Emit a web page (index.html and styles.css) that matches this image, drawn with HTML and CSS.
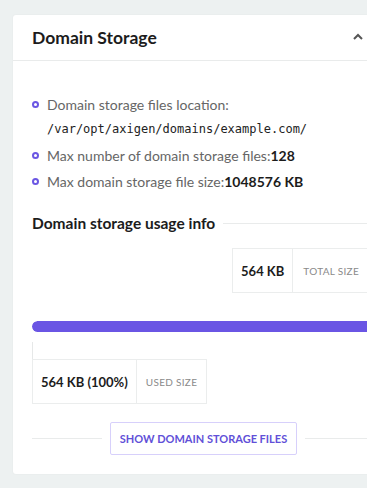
FILE: index.html
```html
<!DOCTYPE html>
<html lang="en">
<head>
    <meta charset="UTF-8">
    <title>Domain Storage</title>
    <link rel="stylesheet" href="styles.css">
</head>
<body>
<div class="page">
    <div class="card">
        <div class="card-head">
            <h2 class="card-title">Domain Storage</h2>
            <svg class="chevron" width="10" height="7" viewBox="0 0 10 7">
                <path d="M1 6 L5 2 L9 6" fill="none" stroke="#555" stroke-width="2"/>
            </svg>
        </div>
        <div class="card-body">
            <ul class="info">
                <li>
                    <span class="dot"></span>
                    <div>Domain storage files location:<br><span class="mono">/var/opt/axigen/domains/example.com/</span></div>
                </li>
                <li>
                    <span class="dot"></span>
                    <div>Max number of domain storage files:<b>128</b></div>
                </li>
                <li>
                    <span class="dot"></span>
                    <div>Max domain storage file size:<b>1048576 KB</b></div>
                </li>
            </ul>

            <div class="section-title">
                <h3>Domain storage usage info</h3>
                <span class="rule"></span>
            </div>

            <div class="total-row">
                <div class="stat">
                    <span class="stat-value">564 KB</span>
                    <span class="stat-label">TOTAL SIZE</span>
                </div>
            </div>

            <div class="bar"><div class="bar-fill" style="width: 100%"></div></div>

            <div class="tick"></div>
            <div class="used-row">
                <div class="stat">
                    <span class="stat-value">564 KB (100%)</span>
                    <span class="stat-label">USED SIZE</span>
                </div>
            </div>

            <div class="actions">
                <span class="rule"></span>
                <button class="btn">SHOW DOMAIN STORAGE FILES</button>
                <span class="rule"></span>
            </div>
        </div>
    </div>
</div>
</body>
</html>
```

FILE: styles.css
```css
*{
    margin: 0;
    padding: 0;
    box-sizing: border-box;
}
body{
    background-color: #edf1f1;
    font-family: Lato, "Liberation Sans", sans-serif;
    color: #222;
    overflow: hidden;
}
.page{
    padding: 15px 0 0 13px;
    height: 488px;
}
.card{
    width: 375px;
    height: 459px;
    background-color: #fff;
    border-radius: 3px;
    box-shadow: 0 0 2px rgba(0,0,0,0.05);
}
.card-head{
    height: 46px;
    border-bottom: 1px solid #e9ebeb;
    display: flex;
    align-items: center;
    justify-content: space-between;
    padding: 0 25px 0 19px;
}
.card-title{
    font-size: 17.5px;
    font-weight: 700;
    color: #1c1c1c;
}
.chevron{
    margin-top: -2px;
}
.card-body{
    padding: 32px 13px 0 19px;
}
.info{
    list-style: none;
    font-size: 14px;
    color: #666;
}
.info li{
    display: flex;
    align-items: flex-start;
    line-height: 23px;
    margin-bottom: 3px;
}
.info b{
    color: #1c1c1c;
    font-weight: 700;
}
.dot{
    width: 7px;
    height: 7px;
    border: 2px solid #6b57e3;
    border-radius: 50%;
    margin: 8px 8px 0 0;
    flex: none;
}
.mono{
    font-family: "DejaVu Sans Mono", monospace;
    font-size: 12px;
    color: #222;
}
.section-title{
    display: flex;
    align-items: center;
    margin-top: 21px;
}
.section-title h3{
    font-size: 15.5px;
    font-weight: 700;
    color: #1c1c1c;
    white-space: nowrap;
    margin-right: 8px;
}
.rule{
    flex: 1;
    height: 1px;
    background-color: #e9ebeb;
}
.total-row{
    display: flex;
    justify-content: flex-end;
    margin-top: 16px;
    margin-right: 5px;
}
.used-row{
    display: flex;
}
.stat{
    display: flex;
    height: 45px;
    border: 1px solid #ebeded;
    white-space: nowrap;
}
.stat-value{
    display: flex;
    align-items: center;
    padding: 0 8px;
    font-size: 13px;
    font-weight: 700;
    color: #1c1c1c;
    border-right: 1px solid #ebeded;
}
.stat-label{
    display: flex;
    align-items: center;
    padding: 0 10px;
    font-size: 10px;
    color: #8a8a8a;
    letter-spacing: 0.3px;
}
.used-row .stat-label{
    padding: 0 9px;
}
.bar{
    margin-top: 28px;
    height: 11px;
    border-radius: 6px;
    background-color: #ececf8;
    overflow: hidden;
    margin-right: -20px;
}
.bar-fill{
    height: 100%;
    background-color: #6a55e4;
    border-radius: 6px;
}
.tick{
    width: 1px;
    height: 17px;
    margin-top: 10px;
    background-color: #e6e8e8;
}
.actions{
    display: flex;
    align-items: center;
    margin-top: 18px;
    gap: 8px;
}
.btn{
    font-family: Lato, "Liberation Sans", sans-serif;
    background-color: #fff;
    border: 1px solid #d7d0fb;
    border-radius: 2px;
    color: #6150d8;
    font-weight: 700;
    font-size: 11px;
    height: 33px;
    padding: 0 9px;
}
```
